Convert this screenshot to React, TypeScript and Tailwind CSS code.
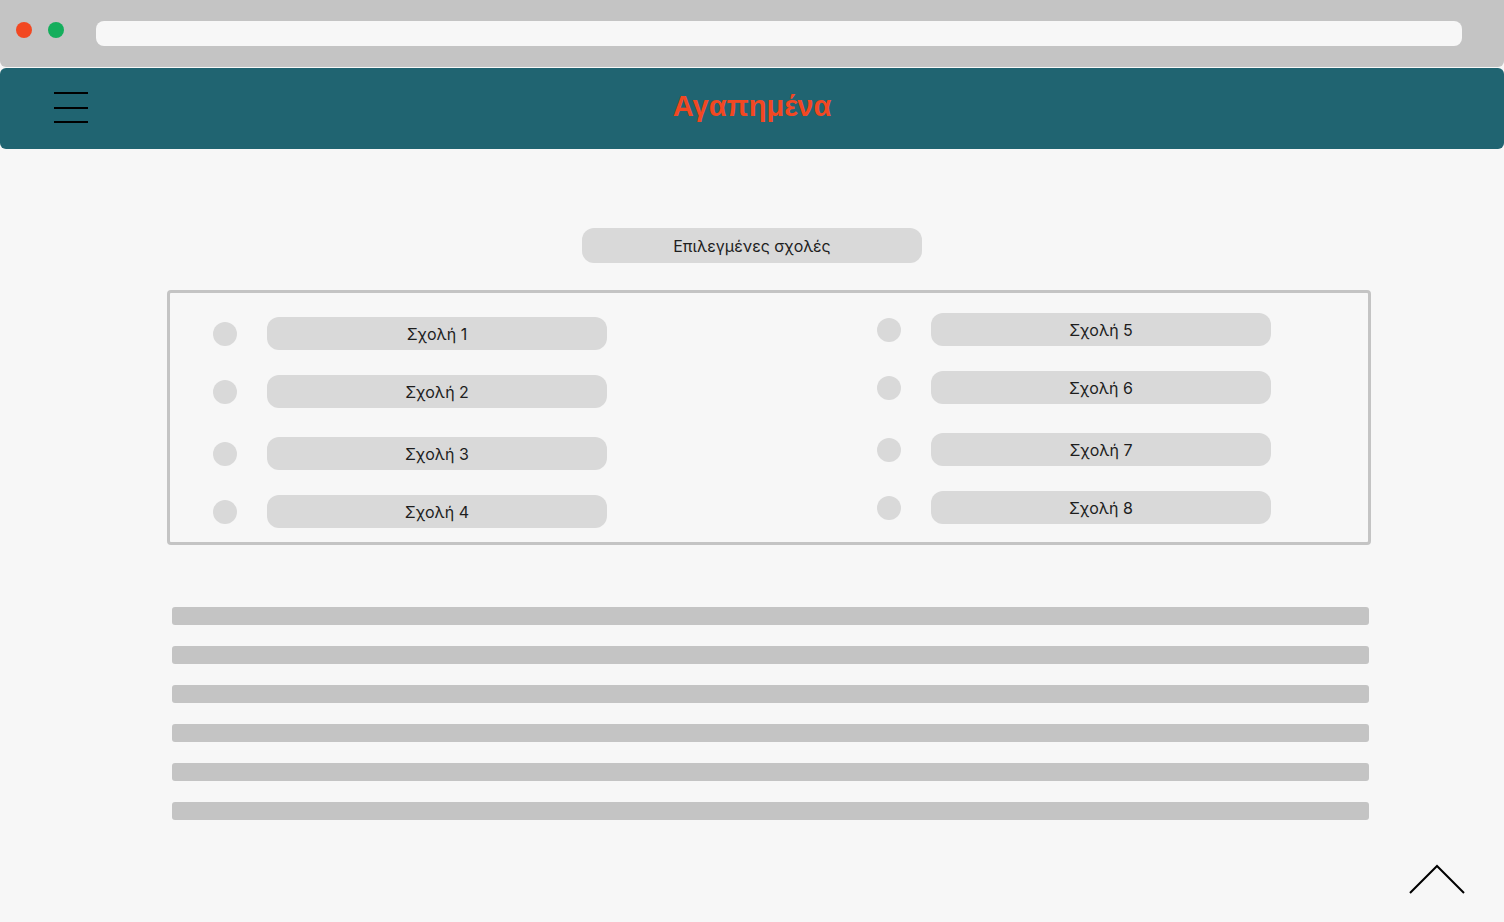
import React from 'react';

const leftSchools = ['Σχολή 1', 'Σχολή 2', 'Σχολή 3', 'Σχολή 4'];
const rightSchools = ['Σχολή 5', 'Σχολή 6', 'Σχολή 7', 'Σχολή 8'];
// uneven spacing between rows, as in the mockup
const rowGaps = ['mt-0', 'mt-[25px]', 'mt-[29px]', 'mt-[25px]'];

const SchoolRow: React.FC<{ label: string; gap: string }> = ({ label, gap }) => (
  <div className={`flex items-center ${gap}`}>
    <span className="h-6 w-6 rounded-full bg-[#d9d9d9]" />
    <div className="ml-[30px] flex h-[33px] w-[340px] items-center justify-center rounded-xl bg-[#d9d9d9] text-base text-[#1e1e1e]">
      {label}
    </div>
  </div>
);

const App: React.FC = () => {
  return (
    <div className="relative min-h-[922px] bg-[#f7f7f7] font-['Inter','Noto_Sans',sans-serif]">
      {/* browser chrome */}
      <div className="flex h-[67px] items-center rounded-b-[6px] bg-[#c4c4c4] pl-4 pr-[42px]">
        <span className="-mt-[7px] h-4 w-4 rounded-full bg-[#f24822]" />
        <span className="-mt-[7px] ml-4 h-4 w-4 rounded-full bg-[#14ae5c]" />
        <div className="ml-8 h-[25px] flex-1 rounded-lg bg-[#f7f7f7]" />
      </div>

      {/* header */}
      <header className="relative mt-px flex h-[81px] items-center justify-center rounded-[6px] bg-[#206471]">
        <div className="absolute left-[54px] top-[24px] flex w-[34px] flex-col gap-[12.5px]">
          <span className="h-[2px] w-full bg-black" />
          <span className="h-[2px] w-full bg-black" />
          <span className="h-[2px] w-full bg-black" />
        </div>
        <h1 className="-mt-[4px] font-['Liberation_Sans',Arial,sans-serif] text-[29px] font-bold text-[#f24822]">
          Αγαπημένα
        </h1>
      </header>

      <main className="flex flex-col">
        <div className="mt-[79px] flex h-[35px] w-[340px] items-center justify-center self-center rounded-xl bg-[#d9d9d9] text-base text-[#1e1e1e]">
          Επιλεγμένες σχολές
        </div>

        <section className="ml-[167px] mt-[27px] flex h-[255px] w-[1204px] rounded-[4px] border-[3px] border-[#c4c4c4] pl-[43px]">
          <div className="flex flex-col pt-[24px]">
            {leftSchools.map((s, i) => (
              <SchoolRow key={s} label={s} gap={rowGaps[i]} />
            ))}
          </div>
          <div className="ml-[270px] flex flex-col pt-[20px]">
            {rightSchools.map((s, i) => (
              <SchoolRow key={s} label={s} gap={rowGaps[i]} />
            ))}
          </div>
        </section>

        <div className="ml-[172px] mt-[62px] flex w-[1197px] flex-col gap-[21px]">
          {Array.from({ length: 6 }).map((_, i) => (
            <div key={i} className="h-[18px] rounded-[3px] bg-[#c4c4c4]" />
          ))}
        </div>
      </main>

      {/* back to top */}
      <svg
        className="absolute left-[1408px] top-[863px]"
        width="58"
        height="34"
        viewBox="0 0 58 34"
        fill="none"
      >
        <path d="M2 30 L29 3 L56 30" stroke="black" strokeWidth="2" />
      </svg>
    </div>
  );
};

export default App;
